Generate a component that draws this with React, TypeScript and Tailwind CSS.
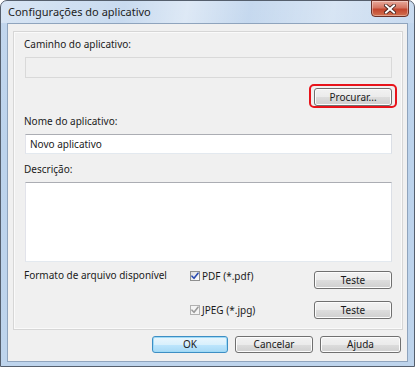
const font = { fontFamily: '"Segoe UI", "Noto Sans", sans-serif' };

function WinButton({ label, className = "", primary = false }: { label: string; className?: string; primary?: boolean }) {
  return (
    <div
      className={`flex items-center justify-center rounded-[3px] border text-[10px] text-[#1b1b1b] ${
        primary
          ? "border-[#3d8ec4] shadow-[inset_0_0_0_1px_#9fdaf6] bg-[linear-gradient(#eaf6fd_0%,#d9f0fc_50%,#bee6fd_51%,#a7d9f5_100%)]"
          : "border-[#707070] shadow-[inset_0_0_0_1px_#fcfcfc] bg-[linear-gradient(#f2f2f2_0%,#ebebeb_50%,#dddddd_51%,#cfcfcf_100%)]"
      } ${className}`}
    >
      {label}
    </div>
  );
}

function Check({ disabled = false }: { disabled?: boolean }) {
  return (
    <div
      className={`flex h-[10px] w-[10px] shrink-0 items-center justify-center border ${
        disabled ? "border-[#b1b1b1] bg-[#f4f4f4]" : "border-[#8e8f8f] bg-[linear-gradient(135deg,#dcdcdc,#ffffff)]"
      }`}
    >
      <svg width="8" height="8" viewBox="0 0 8 8">
        <path
          d="M1 4.2 L3 6.3 L7 1.2"
          fill="none"
          stroke={disabled ? "#9a9a9a" : "#2a4bb0"}
          strokeWidth="1.6"
          strokeLinecap="round"
          strokeLinejoin="round"
        />
      </svg>
    </div>
  );
}

export default function App() {
  return (
    <div style={font} className="h-[367px] w-[415px] bg-white">
      <div className="relative flex h-full w-full flex-col rounded-t-[7px] border border-[#555f6d] bg-[linear-gradient(180deg,#c3d7ee_0%,#bcd3ec_40%,#bed4ec_100%)] px-[6px] pb-[4px]">
        <div className="pointer-events-none absolute inset-x-0 top-0 h-[22px] rounded-t-[6px] bg-[linear-gradient(100deg,rgba(255,255,255,0.35)_0%,rgba(255,255,255,0.1)_30%,rgba(255,255,255,0.45)_45%,rgba(255,255,255,0.05)_60%,rgba(255,255,255,0.35)_80%,rgba(255,255,255,0.1)_100%)]" />
        <div className="relative flex h-[22px] items-center pl-[1px] text-[11px] text-[#1e1e1e]">
          Configurações do aplicativo
        </div>
        <div className="absolute right-[5px] top-[-1px] flex h-[17px] w-[38px] items-center justify-center rounded-b-[4px] border border-[#6b3128] bg-[linear-gradient(180deg,#e9a99b_0%,#d47562_45%,#c3452e_55%,#d2714f_100%)] shadow-[inset_0_0_0_1px_rgba(255,255,255,0.35)]">
          <svg width="12" height="10" viewBox="0 0 12 10">
            <path d="M2 1.5 L10 8.5 M10 1.5 L2 8.5" stroke="#3a1a16" strokeWidth="3.6" strokeLinecap="square" />
            <path d="M2 1.5 L10 8.5 M10 1.5 L2 8.5" stroke="#ffffff" strokeWidth="2" strokeLinecap="square" />
          </svg>
        </div>

        <div className="flex flex-1 flex-col border border-[#8fa4bd] bg-[#f0f0f0]">
          <div className="ml-[5px] mr-[4px] mt-[7px] flex flex-col border border-[#d6d6d6] px-[10px] pb-[10px] pt-[4px] shadow-[inset_0_0_0_1px_#fafafa] text-[10px] text-[#1b1b1b]">
            <div className="h-[16px] leading-[16px]">Caminho do aplicativo:</div>
            <div className="ml-[1px] mt-[5px] h-[21px] border border-[#d9d9d9] bg-[#f0f0f0]" />
            <div className="mt-[10px] flex justify-end">
              <div className="relative">
                <div className="absolute -bottom-[2px] -left-[5px] -right-[5px] -top-[4px] rounded-[5px] border-2 border-[#e8141b]" />
                <WinButton label="Procurar..." className="h-[18px] w-[78px]" />
              </div>
            </div>
            <div className="mt-[7px] h-[16px] leading-[16px]">Nome do aplicativo:</div>
            <div className="ml-[1px] mt-[5px] flex h-[20px] items-center border border-[#abadb3] border-l-[#e2e3ea] border-r-[#dbdfe6] border-b-[#e3e9ef] bg-white pl-[4px]">
              Novo aplicativo
            </div>
            <div className="mt-[7px] h-[16px] leading-[16px]">Descrição:</div>
            <div className="ml-[1px] mt-[5px] h-[80px] border border-[#abadb3] border-l-[#e2e3ea] border-r-[#dbdfe6] border-b-[#e3e9ef] bg-white" />

            <div className="mt-[5px] flex items-start">
              <div className="h-[16px] w-[166px] shrink-0 whitespace-nowrap leading-[16px]">Formato de arquivo disponível</div>
              <div className="mt-[3px] flex items-center gap-[2px]">
                <Check />
                <span className="leading-[12px]">PDF (*.pdf)</span>
              </div>
              <div className="ml-auto mt-[4px]">
                <WinButton label="Teste" className="h-[18px] w-[78px]" />
              </div>
            </div>
            <div className="mt-[12px] flex items-center">
              <div className="ml-[166px] flex items-center gap-[2px]">
                <Check disabled />
                <span className="leading-[12px]">JPEG (*.jpg)</span>
              </div>
              <div className="ml-auto">
                <WinButton label="Teste" className="h-[18px] w-[78px]" />
              </div>
            </div>
          </div>

          <div className="mt-[6px] flex justify-end gap-[7px] pr-[6px]">
            <WinButton label="OK" primary className="h-[17px] w-[76px]" />
            <WinButton label="Cancelar" className="h-[17px] w-[78px]" />
            <WinButton label="Ajuda" className="h-[17px] w-[81px]" />
          </div>
        </div>
      </div>
    </div>
  );
}
